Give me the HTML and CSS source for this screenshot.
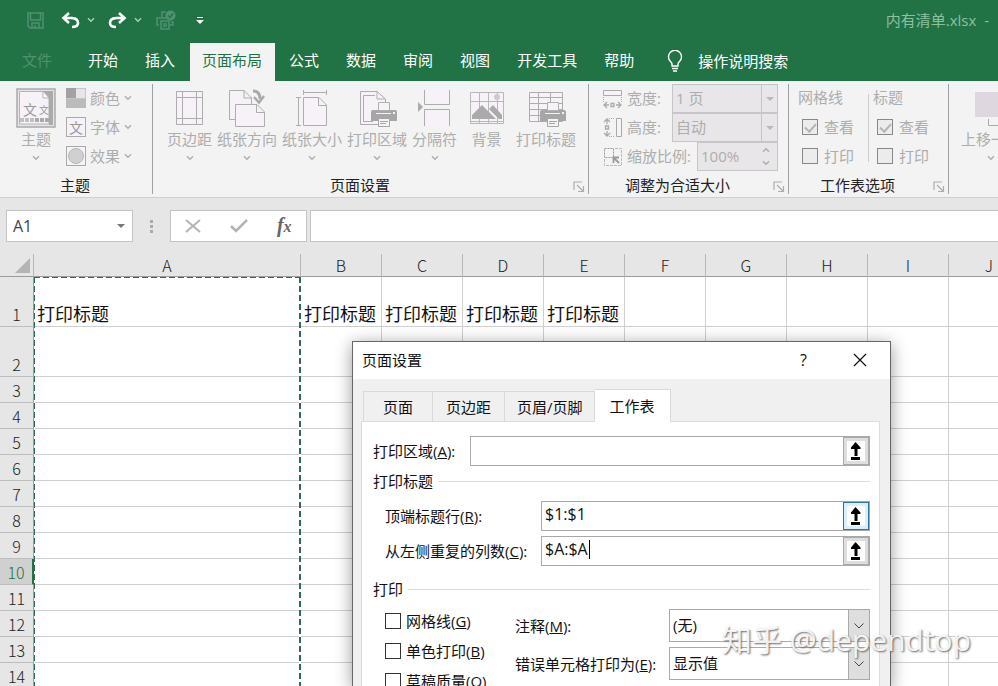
FILE: index.html
```
<!DOCTYPE html>
<html lang="zh-CN">
<head>
<meta charset="UTF-8">
<meta name="viewport" content="width=device-width, initial-scale=1.0">
<title>内有清单.xlsx</title>
<link rel="stylesheet" href="styles.css">
</head>
<body>
<svg class="defs" width="0" height="0">
<symbol id="chev" viewBox="0 0 8 6"><path d="M1 1.2L4 4.2L7 1.2" fill="none" stroke="currentColor" stroke-width="1.4"/></symbol>
<symbol id="launcher" viewBox="0 0 12 12"><path d="M1 9V1H9M4 4L10 10M10.500 5V10.500H5" fill="none" stroke="currentColor" stroke-width="1.200"/></symbol>
<symbol id="pick" viewBox="0 0 27 30"><path d="M13.500 6L18.500 11.500V13H15.500V20H12.500V13H9V11.500ZM9 21H18V24H9Z" fill="#000"/></symbol>
<symbol id="printer" viewBox="0 0 26 25"><path d="M0 10Q0 8 2 8H24Q26 8 26 10V19H0Z" fill="#a6a6a6"/><path d="M7.500 .5H18.500V8.500H7.500Z" fill="#f7f1f8" stroke="#b0b0b0"/><path d="M5 11H20V12H5ZM22 10H24V12H22Z" fill="#f3f3f3"/><path d="M7.500 16.500H18.500V24.500H7.500Z" fill="#f7f1f8" stroke="#a6a6a6"/><path d="M9 19.500H17M9 21.500H15" stroke="#a6a6a6"/></symbol>
</svg>

<header class="titlebar">
<div class="quick">
<button class="qbtn dim" aria-label="保存"><svg width="17" height="17" viewBox="0 0 17 17"><path d="M1 1H16V16H3L1 14ZM3.500 1V8H13.500V1M5 16V11H12V16M8 13V16" fill="none" stroke="currentColor" stroke-width="1.500"/></svg></button>
<button class="qbtn undo" aria-label="撤消"><svg width="19" height="17" viewBox="0 0 19 17"><path d="M8 1L2.500 6L8 11M3 6H11Q17 6.500 17 11Q17 15 11 15" fill="none" stroke="currentColor" stroke-width="2.600"/></svg></button>
<button class="qbtn qarrow" aria-label="撤消列表"><svg width="8" height="6"><use href="#chev"/></svg></button>
<button class="qbtn redo" aria-label="恢复"><svg width="19" height="17" viewBox="0 0 19 17"><path d="M11 1L16.500 6L11 11M16 6H8Q2 6.500 2 11Q2 15 8 15" fill="none" stroke="currentColor" stroke-width="2.600"/></svg></button>
<button class="qbtn qarrow" aria-label="恢复列表"><svg width="8" height="6"><use href="#chev"/></svg></button>
<button class="qbtn dim check-print" aria-label="打印预览"><svg width="20" height="20" viewBox="0 0 20 20"><path d="M6 7V2H10M3 15H1V8H11M15 12H17V15H14M5 11H13V19H5ZM7 14H11M7 16H11" fill="none" stroke="currentColor" stroke-width="1.500"/><circle cx="14.500" cy="5.500" r="5" fill="currentColor"/><path d="M12 5.500L14 7.500L17 3.500" fill="none" stroke="#217346" stroke-width="1.300"/></svg></button>
<button class="qbtn more" aria-label="自定义快速访问工具栏"><svg width="8" height="9" viewBox="0 0 8 9"><path d="M1 1H7V2H1ZM0 4H8L4 8Z" fill="currentColor"/></svg></button>
</div>
<div class="filename">内有清单.xlsx <span class="dash">-</span></div>
</header>

<nav class="tabs">
<button class="tab file">文件</button>
<button class="tab">开始</button>
<button class="tab">插入</button>
<button class="tab active">页面布局</button>
<button class="tab">公式</button>
<button class="tab">数据</button>
<button class="tab">审阅</button>
<button class="tab">视图</button>
<button class="tab">开发工具</button>
<button class="tab">帮助</button>
<button class="tell"><svg width="16" height="22" viewBox="0 0 16 22"><path d="M5 16V14Q5 13 3.500 11.500A6.500 6.500 0 1 1 12.500 11.500Q11 13 11 14V16ZM5 18.500H11M6 21H10" fill="none" stroke="currentColor" stroke-width="1.400"/></svg>操作说明搜索</button>
</nav>

<section class="ribbon">
<div class="group theme">
<div class="group-body">
<button class="big">
<svg width="40" height="40" viewBox="0 0 40 40"><rect x="1" y="1" width="38" height="38" fill="#e6e3e6" stroke="#aaa" stroke-width="1.500"/><path d="M3.500 3.500H33V36H3.500Z" fill="#f7f1f8" stroke="#b4b4b4"/><path d="M27 3L33 10V37H37V3Z" fill="#aaa"/><path d="M27 3V10H33Z" fill="#fff" stroke="#b4b4b4"/><path d="M4 30H8V34H4ZM9 30H13V34H9ZM14 30H18V34H14Z" fill="#c0c0c0"/><path d="M19 30H23V34H19ZM24 30H28V34H24ZM29 30H33V34H29Z" fill="#aaa"/><text x="7" y="27" font-size="14" fill="#999">文</text><text x="23" y="26" font-size="10" fill="#999">文</text></svg>
<span>主题</span><svg class="chev" width="8" height="6"><use href="#chev"/></svg></button>
<div class="small-list">
<button class="small"><svg width="20" height="20"><path d="M0 0H20V20H0Z" fill="#c8c5c8"/><path d="M0 0H10V10H0Z" fill="#a2a2a2"/><path d="M10 1H19V10H10Z" fill="#e9e3ea"/><path d="M0 11H20V20H0Z" fill="#bbb"/></svg>颜色<svg class="chev" width="8" height="6"><use href="#chev"/></svg></button>
<button class="small"><svg width="20" height="20"><rect x=".5" y=".5" width="19" height="19" fill="#f7f1f8" stroke="#aaa"/><text x="3" y="16" font-size="14" fill="#999">文</text></svg>字体<svg class="chev" width="8" height="6"><use href="#chev"/></svg></button>
<button class="small"><svg width="20" height="20"><rect x=".5" y=".5" width="19" height="19" fill="#f7f1f8" stroke="#aaa"/><circle cx="10" cy="10" r="7.500" fill="#d0d0d0" stroke="#b8b8b8"/></svg>效果<svg class="chev" width="8" height="6"><use href="#chev"/></svg></button>
</div>
</div>
<div class="group-name">主题</div>
</div>

<div class="group setup">
<div class="group-body">
<button class="big"><svg width="40" height="40" viewBox="0 0 40 40"><path d="M6.500 3.500H32.500V36.500H6.500ZM12.500 3V37M26.500 3V37M6 9.500H33M6 30.500H33" fill="#f7f1f8" stroke="#adadad"/></svg><span>页边距</span><svg class="chev" width="8" height="6"><use href="#chev"/></svg></button>
<button class="big"><svg width="40" height="40" viewBox="0 0 40 40"><path d="M2.500 2.500H17L24.500 10V31.500H2.500ZM17 2V10H25" fill="#f7f1f8" stroke="#adadad"/><path d="M8.500 16.500H30L37.500 24V38.500H8.500ZM29.500 16V24.500H38" fill="#f7f1f8" stroke="#adadad"/><path d="M26 3Q33 3 33 11" fill="none" stroke="#aaa" stroke-width="3"/><path d="M27 9L32 14.500L37 8" fill="none" stroke="#aaa" stroke-width="2.500"/></svg><span>纸张方向</span><svg class="chev" width="8" height="6"><use href="#chev"/></svg></button>
<button class="big"><svg width="40" height="40" viewBox="0 0 40 40"><path d="M11.500 9.500H27L34.500 17V37.500H11.500ZM26.500 9V17.500H35" fill="#f7f1f8" stroke="#adadad"/><path d="M11 4.500H35M11.500 2V7M34.500 2V7M6.500 9V38M4 9.500H9M4 37.500H9" fill="none" stroke="#adadad"/></svg><span>纸张大小</span><svg class="chev" width="8" height="6"><use href="#chev"/></svg></button>
<button class="big"><svg width="40" height="40" viewBox="0 0 40 40"><path d="M3.500 3.500H20L28.500 11V36.500H3.500ZM20 3V11H28" fill="#f7f1f8" stroke="#adadad"/><path d="M6.500 34V7.500H18M6.500 33.500H16" fill="none" stroke="#adadad"/><use href="#printer" x="14" y="14" width="26" height="25"/></svg><span>打印区域</span><svg class="chev" width="8" height="6"><use href="#chev"/></svg></button>
<button class="big"><svg width="40" height="40" viewBox="0 0 40 40"><path d="M9.500 2V16.500H34.500V2M9.500 38V21.500H34.500V38" fill="#f7f1f8" stroke="#adadad"/><path d="M3 14L8 19L3 24Z" fill="#aaa"/></svg><span>分隔符</span><svg class="chev" width="8" height="6"><use href="#chev"/></svg></button>
<button class="big narrow"><svg width="40" height="40" viewBox="0 0 40 40"><path d="M3.500 4.500H36.500V35.500H3.500ZM12.500 4V36M21.500 4V36M30.500 4V36M3 13.500H37M3 33.500H37" fill="#f7f1f8" stroke="#b8b8b8"/><circle cx="30" cy="9" r="3" fill="#ccc"/><path d="M5 31V27L15 17L29 31ZM22 21L26 17L35 27V31H32Z" fill="#aaa"/></svg><span>背景</span></button>
<button class="big"><svg width="40" height="40" viewBox="0 0 40 40"><path d="M3.500 4.500H36.500V33.500H3.500ZM12.500 4V34M24.500 4V34M3 9.500H37M3 15.500H37M3 21.500H37M3 27.500H37" fill="#f7f1f8" stroke="#adadad"/><use href="#printer" x="14" y="14" width="26" height="25"/></svg><span>打印标题</span></button>
</div>
<div class="group-name">页面设置</div>
<button class="launch" aria-label="页面设置对话框"><svg width="12" height="12"><use href="#launcher"/></svg></button>
</div>

<div class="group fit">
<div class="fit-row">
<svg width="20" height="20" viewBox="0 0 20 20"><path d="M.5 1.500H18.500V6.500H.5Z" fill="#f7f1f8" stroke="#aaa"/><path d="M.5 8V14M18.500 8V14" stroke="#aaa" stroke-dasharray="1 1"/><path d="M4 13L1 16L4 19M1 16H6M15 13L18 16L15 19M18 16H13M8 14.500H11V17.500H8Z" fill="none" stroke="#aaa" stroke-width="1.300"/></svg>
<label for="fitw">宽度:</label>
<span class="rsel"><select id="fitw"><option>1 页</option></select><i></i></span>
</div>
<div class="fit-row">
<svg width="20" height="20" viewBox="0 0 20 20"><path d="M13.500 .5H18.500V18.500H13.500Z" fill="#f7f1f8" stroke="#aaa"/><path d="M6 .5H12M6 18.500H12" stroke="#aaa" stroke-dasharray="1 1"/><path d="M1 4L4 1L7 4M4 1V6M1 15L4 18L7 15M4 18V13M2.500 8H5.500V11H2.500Z" fill="none" stroke="#aaa" stroke-width="1.300"/></svg>
<label for="fith">高度:</label>
<span class="rsel"><select id="fith"><option>自动</option></select><i></i></span>
</div>
<div class="fit-row">
<svg width="20" height="20" viewBox="0 0 20 20"><path d="M1.500 1.500H10.500V10.500H1.500Z" fill="#f7f1f8" stroke="#999" stroke-dasharray="2 1"/><path d="M12 1.500H18.500V18.500H1.500V12" fill="none" stroke="#bbb" stroke-dasharray="3 1"/><path d="M16 16L11 11M10.500 16V10.500H16" fill="none" stroke="#999" stroke-width="1.800"/></svg>
<label for="scale">缩放比例:</label>
<span class="spin"><input id="scale" type="text" value="100%"><span class="spin-arrows"><svg class="up" width="8" height="6"><use href="#chev"/></svg><svg width="8" height="6"><use href="#chev"/></svg></span></span>
</div>
<div class="group-name">调整为合适大小</div>
<button class="launch" aria-label="缩放对话框"><svg width="12" height="12"><use href="#launcher"/></svg></button>
</div>

<div class="group options">
<div class="opt-cols">
<div class="opt-col">
<span class="opt-head">网格线</span>
<label class="opt"><input type="checkbox" checked>查看</label>
<label class="opt"><input type="checkbox">打印</label>
</div>
<div class="opt-col">
<span class="opt-head">标题</span>
<label class="opt"><input type="checkbox" checked>查看</label>
<label class="opt"><input type="checkbox">打印</label>
</div>
</div>
<div class="group-name">工作表选项</div>
<button class="launch" aria-label="工作表选项对话框"><svg width="12" height="12"><use href="#launcher"/></svg></button>
</div>

<div class="group arrange">
<button class="big"><svg width="40" height="40" viewBox="0 0 40 40"><path d="M4 4H36V29H4Z" fill="#ded7df"/><path d="M17.500 31V37.500H32" fill="none" stroke="#aaa"/></svg><span>上移一层</span><svg class="chev" width="8" height="6"><use href="#chev"/></svg></button>
</div>
</section>

<section class="formula">
<button class="namebox">A1<i></i></button>
<span class="grip"><i></i><i></i><i></i></span>
<div class="fbuttons">
<button aria-label="取消"><svg width="16" height="14" viewBox="0 0 16 14"><path d="M1 1L15 13M15 1L1 13" stroke="#b4b4b4" stroke-width="2"/></svg></button>
<button aria-label="输入"><svg width="18" height="14" viewBox="0 0 18 14"><path d="M1 7L6 12L17 1" fill="none" stroke="#b4b4b4" stroke-width="2.500"/></svg></button>
<button class="fx" aria-label="插入函数">f<small>x</small></button>
</div>
<input class="finput" type="text" aria-label="编辑栏">
</section>

<main class="sheet">
<table class="grid">
<colgroup><col class="c-num"><col class="c-a"><col span="9" class="c-std"></colgroup>
<thead>
<tr><th class="corner"><svg width="15" height="15"><path d="M15 0V15H0Z" fill="#b4b4b4"/></svg></th><th>A</th><th>B</th><th>C</th><th>D</th><th>E</th><th>F</th><th>G</th><th>H</th><th>I</th><th>J</th></tr>
</thead>
<tbody>
<tr class="tall"><th>1</th><td>打印标题</td><td>打印标题</td><td>打印标题</td><td>打印标题</td><td>打印标题</td><td></td><td></td><td></td><td></td><td></td></tr>
<tr class="tall"><th>2</th><td></td><td></td><td></td><td></td><td></td><td></td><td></td><td></td><td></td><td></td></tr>
<tr><th>3</th><td></td><td></td><td></td><td></td><td></td><td></td><td></td><td></td><td></td><td></td></tr>
<tr><th>4</th><td></td><td></td><td></td><td></td><td></td><td></td><td></td><td></td><td></td><td></td></tr>
<tr><th>5</th><td></td><td></td><td></td><td></td><td></td><td></td><td></td><td></td><td></td><td></td></tr>
<tr><th>6</th><td></td><td></td><td></td><td></td><td></td><td></td><td></td><td></td><td></td><td></td></tr>
<tr><th>7</th><td></td><td></td><td></td><td></td><td></td><td></td><td></td><td></td><td></td><td></td></tr>
<tr><th>8</th><td></td><td></td><td></td><td></td><td></td><td></td><td></td><td></td><td></td><td></td></tr>
<tr><th>9</th><td></td><td></td><td></td><td></td><td></td><td></td><td></td><td></td><td></td><td></td></tr>
<tr class="current"><th>10</th><td></td><td></td><td></td><td></td><td></td><td></td><td></td><td></td><td></td><td></td></tr>
<tr><th>11</th><td></td><td></td><td></td><td></td><td></td><td></td><td></td><td></td><td></td><td></td></tr>
<tr><th>12</th><td></td><td></td><td></td><td></td><td></td><td></td><td></td><td></td><td></td><td></td></tr>
<tr><th>13</th><td></td><td></td><td></td><td></td><td></td><td></td><td></td><td></td><td></td><td></td></tr>
<tr><th>14</th><td></td><td></td><td></td><td></td><td></td><td></td><td></td><td></td><td></td><td></td></tr>
</tbody>
</table>
<div class="ants"></div>

<div class="dialog" role="dialog" aria-label="页面设置">
<div class="dlg-title">
<span>页面设置</span>
<button class="help" aria-label="帮助">?</button>
<button class="close" aria-label="关闭"><svg width="14" height="14" viewBox="0 0 14 14"><path d="M1 1L13 13M13 1L1 13" stroke="#111" stroke-width="1.200"/></svg></button>
</div>
<div class="dlg-body">
<div class="dlg-tabs">
<button class="dlg-tab first">页面</button>
<button class="dlg-tab">页边距</button>
<button class="dlg-tab tight">页眉/页脚</button>
<button class="dlg-tab on">工作表</button>
</div>
<div class="panel">
<div class="field">
<label class="area" for="area">打印区域(<u>A</u>):</label>
<span class="ref"><input id="area" type="text"><button aria-label="选择区域"><svg width="27" height="30"><use href="#pick"/></svg></button></span>
</div>
<div class="section">打印标题</div>
<div class="field inner">
<label for="rows">顶端标题行(<u>R</u>):</label>
<span class="ref hot"><input id="rows" type="text" value="$1:$1"><button aria-label="选择行"><svg width="27" height="30"><use href="#pick"/></svg></button></span>
</div>
<div class="field inner">
<label for="cols">从左侧重复的列数(<u>C</u>):</label>
<span class="ref"><input id="cols" type="text" value="$A:$A"><i class="caret"></i><button aria-label="选择列"><svg width="27" height="30"><use href="#pick"/></svg></button></span>
</div>
<div class="section second">打印</div>
<div class="print">
<div class="checks">
<label><input type="checkbox"><span>网格线(<u>G</u>)</span></label>
<label><input type="checkbox"><span>单色打印(<u>B</u>)</span></label>
<label><input type="checkbox"><span>草稿质量(<u>Q</u>)</span></label>
</div>
<div class="choices">
<div class="choice"><label for="notes">注释(<u>M</u>):</label><span class="drop"><select id="notes"><option>(无)</option></select><span class="drop-btn"><svg width="12" height="8" viewBox="0 0 12 8"><path d="M1.500 1.500L6 6L10.500 1.500" fill="none" stroke="#444"/></svg></span></span></div>
<div class="choice"><label for="errs">错误单元格打印为(<u>E</u>):</label><span class="drop"><select id="errs"><option>显示值</option></select><span class="drop-btn"><svg width="12" height="8" viewBox="0 0 12 8"><path d="M1.500 1.500L6 6L10.500 1.500" fill="none" stroke="#444"/></svg></span></span></div>
</div>
</div>
</div>
</div>
</div>
</main>
<div class="watermark">知乎 @dependtop</div>
</body>
</html>
```
FILE: styles.css
```
* {
box-sizing: border-box;
}
body {
margin: 0;
height: 100vh;
display: flex;
flex-direction: column;
overflow: hidden;
position: relative;
background: #fff;
font-family: "Open Sans", "Noto Sans CJK SC", sans-serif;
font-size: 15px;
line-height: 20px;
color: #111;
}
button, input, select {
font: inherit;
color: inherit;
margin: 0;
padding: 0;
border: 0;
background: none;
border-radius: 0;
outline: none;
}
select {
appearance: none;
}
svg {
display: block;
flex: none;
}
.defs {
position: absolute;
}

/* title bar */
.titlebar {
flex: none;
height: 43px;
padding: 0 9px 3px 27px;
display: flex;
align-items: center;
justify-content: space-between;
background: #217346;
color: #fff;
}
.quick {
display: flex;
align-items: center;
}
.dim {
color: #4f9170;
}
.undo {
margin-left: 17px;
}
.qarrow {
margin-left: 7px;
color: #a9d3ba;
}
.redo {
margin-left: 13px;
}
.check-print {
margin-left: 14px;
}
.more {
margin-left: 20px;
}
.filename {
color: #8cc0a0;
}
.dash {
margin-left: 4px;
}

/* ribbon tabs */
.tabs {
flex: none;
height: 38px;
padding-left: 9px;
display: flex;
background: #217346;
color: #fff;
white-space: nowrap;
}
.tab {
padding: 0 14px 4px 13px;
}
.file {
margin-right: 9px;
color: #4f9170;
}
.tab.active {
margin-left: 1px;
padding: 0 13px 4px 12px;
margin-right: 1px;
background: #f3f3f3;
color: #217346;
}
.tell {
display: flex;
align-items: center;
gap: 15px;
margin-left: 19px;
padding-bottom: 2px;
}

/* ribbon */
.ribbon {
flex: none;
height: 117px;
display: flex;
overflow: hidden;
padding: 3px 0;
background: #f3f3f3;
border-bottom: 1px solid #cfcfcf;
color: #adadad;
white-space: nowrap;
}
.group {
flex: none;
position: relative;
display: flex;
flex-direction: column;
border-right: 1px solid #a0a0a0;
}
.group-body {
display: flex;
}
.group-name {
margin-top: auto;
text-align: center;
line-height: 18px;
color: #222;
}
.launch {
position: absolute;
right: 3px;
bottom: 1px;
}
.big {
display: flex;
flex-direction: column;
align-items: center;
padding-top: 4px;
height: 87px;
}
.big span {
margin-top: 1px;
}
.big .chev {
margin-top: 6px;
}
.theme {
width: 153px;
padding-left: 16px;
}
.theme .group-name {
padding-right: 18px;
}
.small-list {
margin-left: 10px;
}
.small {
display: flex;
align-items: center;
height: 29px;
padding-bottom: 2px;
gap: 4px;
}
.setup {
width: 436px;
padding-left: 14px;
}
.setup .group-body {
gap: 5px;
}
.narrow {
padding: 4px 4px 0;
width: 49px;
}
.setup .group-name {
padding-right: 35px;
}
.options .group-name {
padding-right: 31px;
}
.fit {
width: 200px;
padding: 0 10px 0 14px;
}
.fit .group-name {
padding-right: 26px;
}
.fit-row {
display: flex;
align-items: center;
height: 29px;
gap: 4px;
}
.fit-row label {
padding-bottom: 2px;
}
.rsel, .spin {
position: relative;
margin-left: auto;
width: 106px;
height: 29px;
background: #e8e6e8;
border: 1px solid #c6c6c6;
}
.rsel select {
width: 100%;
height: 27px;
padding: 0 0 2px 3px;
}
.rsel i {
position: absolute;
right: 0;
top: 0;
width: 16px;
height: 27px;
border-left: 1px solid #c6c6c6;
pointer-events: none;
}
.rsel i::after {
content: "";
position: absolute;
left: 4px;
top: 12px;
border: 4px solid transparent;
border-top-color: #b8b8b8;
border-bottom: 0;
}
.spin {
width: 81px;
display: flex;
align-items: center;
}
.spin input {
width: 60px;
padding: 0 0 2px 3px;
}
.spin-arrows {
margin-left: auto;
margin-right: 7px;
display: flex;
flex-direction: column;
gap: 7px;
}
.up {
transform: rotate(180deg);
}
.options {
width: 160px;
padding-left: 9px;
}
.opt-cols {
display: flex;
}
.opt-col {
width: 76px;
display: flex;
flex-direction: column;
}
.opt-col:first-child {
background: linear-gradient(#ccc, #ccc) 70px 10px / 1px 68px no-repeat;
}
.opt-head, .opt {
height: 29px;
line-height: 27px;
}
.opt {
display: flex;
align-items: center;
gap: 6px;
padding: 0 0 1px 4px;
}
.opt input {
appearance: none;
width: 16px;
height: 16px;
border: 1px solid #888;
background: #ececec;
display: flex;
justify-content: center;
}
.opt input:checked::before {
content: "";
width: 5px;
height: 9px;
margin-top: 1px;
border: solid #b4b4b4;
border-width: 0 2px 2px 0;
transform: rotate(42deg);
}
.arrange {
padding-left: 12px;
border: 0;
}

/* formula bar */
.formula {
flex: none;
height: 56px;
padding: 12px 0 12px 6px;
display: flex;
align-items: stretch;
background: #e6e6e6;
}
.namebox {
width: 127px;
display: flex;
align-items: center;
justify-content: space-between;
padding: 0 7px 0 6px;
background: #fff;
border: 1px solid #c3c3c3;
font-size: 16px;
color: #444;
}
.namebox i {
border: 4px solid transparent;
border-top-color: #777;
border-bottom: 0;
}
.grip {
width: 37px;
display: flex;
flex-direction: column;
align-items: center;
justify-content: center;
gap: 2px;
}
.grip i {
width: 3px;
height: 3px;
background: #aaa;
}
.fbuttons {
width: 137px;
display: flex;
align-items: center;
justify-content: space-around;
background: #fff;
border: 1px solid #c3c3c3;
}
.fx {
font: italic bold 20px/24px "Liberation Serif", serif;
color: #666;
}
.fx small {
font-size: 16px;
}
.finput {
flex: 1;
min-width: 0;
margin-left: 3px;
padding: 0 6px;
background: #fff;
border: 1px solid #c3c3c3;
border-right: 0;
}

/* worksheet */
.sheet {
flex: 1;
min-height: 0;
position: relative;
overflow: hidden;
}
.grid {
table-layout: fixed;
width: 1030px;
border-collapse: separate;
border-spacing: 0;
font-family: "Noto Sans CJK SC", sans-serif;
}
.c-num {
width: 34px;
}
.c-a {
width: 267px;
}
.c-std {
width: 81px;
}
.grid th {
padding: 0;
font-size: 16px;
font-weight: 300;
line-height: 20px;
background: #e6e6e6;
vertical-align: bottom;
color: #222;
}
.grid thead th {
height: 23px;
padding-bottom: 1px;
border-right: 1px solid #b8b8b8;
border-bottom: 1px solid #9b9b9b;
}
.grid .corner svg {
margin: 0 0 2px 15px;
}
.grid tbody th {
padding-bottom: 2px;
border-right: 1px solid #9b9b9b;
border-bottom: 1px solid #bdbdbd;
}
.grid td {
height: 26px;
padding: 0 2px 1px 3px;
font-size: 18px;
line-height: 24px;
vertical-align: bottom;
white-space: nowrap;
border-right: 1px solid #d0d0d0;
border-bottom: 1px solid #d0d0d0;
}
.grid .tall td {
height: 50px;
}
.grid .current th {
background: #d0d0d0;
color: #217346;
border-right: 2px solid #217346;
}
.ants {
position: absolute;
left: 34px;
top: 23px;
bottom: 0;
width: 267px;
pointer-events: none;
background:
repeating-linear-gradient(90deg, #2f6b50 0 6px, #fff 6px 9px) 0 0 / 100% 1px no-repeat,
repeating-linear-gradient(#2f6b50 0 6px, #fff 6px 9px) 0 0 / 1px 100% no-repeat,
repeating-linear-gradient(#2f6b50 0 6px, #fff 6px 9px) 100% 0 / 2px 100% no-repeat;
}

/* page setup dialog */
.dialog {
position: absolute;
left: 352px;
top: 87px;
bottom: -1px;
width: 539px;
display: flex;
flex-direction: column;
background: #f0f0f0;
border: 1px solid #666;
box-shadow: 0 3px 16px rgba(0, 0, 0, 0.4);
}
.dlg-title {
flex: none;
height: 37px;
display: flex;
align-items: center;
padding: 0 23px 2px 9px;
background: #fff;
}
.help {
margin-left: auto;
margin-right: 46px;
font-size: 16px;
}
.dlg-body {
flex: 1;
min-height: 0;
display: flex;
flex-direction: column;
padding: 10px 10px 0 8px;
}
.dlg-tabs {
flex: none;
display: flex;
align-items: flex-end;
height: 33px;
padding-left: 2px;
margin-bottom: -1px;
}
.dlg-tab {
height: 31px;
padding: 0 13px;
border-top: 1px solid #d9d9d9;
border-right: 1px solid #d9d9d9;
}
.first {
padding: 0 19px;
border-left: 1px solid #d9d9d9;
}
.tight {
padding: 0 11px 0 12px;
}
.dlg-tab.on {
height: 33px;
padding: 0 15px;
background: #fff;
position: relative;
}
.panel {
flex: 1;
min-height: 0;
padding: 14px 9px 0 11px;
background: #fff;
border: 1px solid #dcdcdc;
border-bottom: 0;
}
.field {
display: flex;
align-items: center;
height: 30px;
}
.inner {
padding-left: 12px;
margin-bottom: 5px;
}
.field label {
width: 156px;
}
.field .area {
width: 97px;
}
.ref {
flex: 1;
display: flex;
height: 30px;
position: relative;
border: 1px solid #a9a9a9;
}
.ref input {
flex: 1;
min-width: 0;
padding: 0 3px 4px;
font-size: 16px;
}
.ref button {
width: 26px;
padding-right: 2px;
display: flex;
align-items: center;
justify-content: center;
overflow: hidden;
background: #fff;
border: 1px solid #aaa;
box-shadow: inset 0 0 0 3px #dedede;
}
.hot button {
border-color: #2f7199;
box-shadow: inset 0 0 0 3px #d9effb;
}
.caret {
position: absolute;
left: 47px;
top: 3px;
width: 1px;
height: 19px;
background: #000;
}
.section {
display: flex;
align-items: center;
gap: 5px;
margin: 5px 0 10px;
}
.section::after {
content: "";
flex: 1;
height: 1px;
background: #dcdcdc;
}
.second {
margin: 13px 0 7px;
}
.print {
display: flex;
padding-left: 12px;
}
.checks {
width: 130px;
}
.checks label {
display: flex;
align-items: center;
gap: 5px;
height: 30px;
}
.checks input {
appearance: none;
width: 16px;
height: 16px;
border: 1px solid #333;
background: #fff;
}
.choices {
flex: 1;
padding-top: 3px;
}
.choice {
display: flex;
align-items: center;
justify-content: space-between;
height: 33px;
margin-bottom: 5px;
}
.drop {
position: relative;
width: 201px;
height: 33px;
border: 1px solid #a9a9a9;
}
.drop select {
width: 100%;
height: 31px;
padding: 0 0 2px 3px;
}
.drop-btn {
position: absolute;
right: 0;
top: 0;
width: 21px;
height: 31px;
display: flex;
align-items: center;
justify-content: center;
background: #dedede;
border-left: 1px solid #a9a9a9;
pointer-events: none;
}
.watermark {
position: absolute;
right: 27px;
bottom: 26px;
font-size: 30px;
line-height: 40px;
color: rgba(255, 255, 255, 0.9);
text-shadow: 1px 1px 2px #666;
pointer-events: none;
}
```
